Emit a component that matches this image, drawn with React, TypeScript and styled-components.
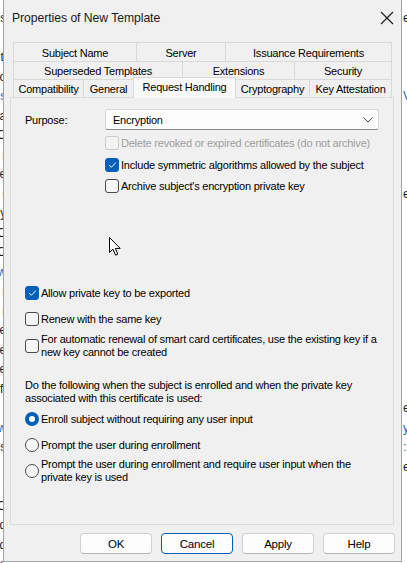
import React from "react";
import styled, { createGlobalStyle } from "styled-components";

const Global = createGlobalStyle`
  html, body { margin: 0; padding: 0; background: #ffffff; }
  body { font-family: "Liberation Sans", Arial, sans-serif; font-size: 11px; letter-spacing: -0.22px; color: #000; }
  * { box-sizing: border-box; }
`;

const Page = styled.div`
  display: flex;
  width: 407px;
  height: 563px;
  overflow: hidden;
  background: #fff;
`;

const Strip = styled.div<{ $w: number; $side: "left" | "right" }>`
  width: ${(p) => p.$w}px;
  flex: none;
  overflow: hidden;
  display: flex;
  flex-direction: column;
  padding-top: 9px;
  align-items: ${(p) => (p.$side === "left" ? "flex-end" : "flex-start")};
`;

const StripChar = styled.div<{ $c: string; $side: "left" | "right" }>`
  height: 19.5px;
  line-height: 19.5px;
  font-size: 12px;
  color: ${(p) => p.$c};
  margin-right: ${(p) => (p.$side === "left" ? "-3px" : "0")};
  margin-left: ${(p) => (p.$side === "right" ? "1px" : "0")};
  white-space: nowrap;
`;

const Dialog = styled.div`
  width: 399px;
  height: 562px;
  flex: none;
  background: #f0f0f0;
  border: 1px solid #a3a3a3;
  border-top: none;
  display: flex;
  flex-direction: column;
  position: relative;
`;

const TitleBar = styled.div`
  height: 42px;
  display: flex;
  align-items: flex-start;
  justify-content: space-between;
  padding: 10px 7px 0 8px;
`;

const Title = styled.div`
  font-size: 12.2px;
  letter-spacing: -0.05px;
  line-height: 16px;
  color: #1a1a1a;
`;

const CloseBtn = styled.div`
  width: 14px;
  height: 14px;
  margin-top: 1px;
  display: flex;
`;

const TabArea = styled.div`
  padding: 0 8px 0 9px;
  display: flex;
  flex-direction: column;
`;

const TabRow = styled.div<{ $h: number }>`
  display: flex;
  height: ${(p) => p.$h}px;
  align-items: flex-end;
`;

const Tab = styled.div<{ $w: number; $active?: boolean }>`
  width: ${(p) => p.$w}px;
  height: ${(p) => (p.$active ? "calc(100% + 3px)" : "100%")};
  margin-bottom: ${(p) => (p.$active ? "-1px" : "0")};
  flex: none;
  border: 1px solid #d9d9d9;
  border-bottom: none;
  margin-right: -1px;
  background: ${(p) => (p.$active ? "#f9f9f9" : "#f0f0f0")};
  display: flex;
  align-items: ${(p) => (p.$active ? "flex-start" : "center")};
  justify-content: center;
  padding-top: ${(p) => (p.$active ? "2px" : "1px")};
  line-height: 14px;
  color: #000;
  white-space: nowrap;
  position: relative;
  z-index: ${(p) => (p.$active ? 2 : 1)};
`;

const Panel = styled.div`
  margin: 0 7px 0 6px;
  height: 428px;
  border: 1px solid #dcdcdc;
  background: #f0f0f0;
  display: flex;
  flex-direction: column;
  padding-left: 14px;
  position: relative;
`;

const PurposeRow = styled.div`
  display: flex;
  align-items: center;
  margin-top: 11px;
  height: 21px;
`;

const Label = styled.div`
  width: 80px;
  line-height: 14px;
`;

const Combo = styled.div`
  width: 274px;
  height: 21px;
  background: #fdfdfd;
  border: 1px solid #d6d6d6;
  border-bottom-color: #8a8a8a;
  border-radius: 3px;
  display: flex;
  align-items: center;
  justify-content: space-between;
  padding: 0 5px 0 7px;
  line-height: 14px;
`;

const Option = styled.div<{ $mt: number; $indent?: number; $disabled?: boolean }>`
  display: flex;
  align-items: center;
  margin-top: ${(p) => p.$mt}px;
  margin-left: ${(p) => p.$indent || 0}px;
  color: ${(p) => (p.$disabled ? "#9d9d9d" : "#000")};
  line-height: 13px;
  min-height: 14px;
  white-space: nowrap;
`;

const Box = styled.span<{ $checked?: boolean; $disabled?: boolean }>`
  width: 14px;
  height: 14px;
  flex: none;
  border-radius: 3px;
  border: 1px solid
    ${(p) => (p.$checked ? "#005fb8" : p.$disabled ? "#c9c9c9" : "#4a4a4a")};
  background: ${(p) => (p.$checked ? "#005fb8" : p.$disabled ? "#f3f3f3" : "#f6f6f6")};
  display: flex;
  align-items: center;
  justify-content: center;
  margin-right: 2px;
`;

const Radio = styled.span<{ $checked?: boolean }>`
  width: 14px;
  height: 14px;
  flex: none;
  border-radius: 50%;
  border: ${(p) => (p.$checked ? "4px solid #005fb8" : "1px solid #4a4a4a")};
  background: ${(p) => (p.$checked ? "#ffffff" : "#f6f6f6")};
  margin-right: 2px;
`;

const Text = styled.div`
  line-height: 13px;
`;

const Paragraph = styled.div<{ $mt: number }>`
  margin-top: ${(p) => p.$mt}px;
  line-height: 13px;
  white-space: nowrap;
`;

const Cursor = styled.div`
  position: absolute;
  left: 98px;
  top: 139px;
  width: 13px;
  height: 19px;
`;

const ButtonRow = styled.div`
  display: flex;
  justify-content: flex-end;
  gap: 9px;
  padding: 8px 6px 0 0;
`;

const Button = styled.div<{ $focus?: boolean }>`
  width: 72px;
  height: 21px;
  border-radius: 4px;
  background: #fdfdfd;
  border: 1px solid ${(p) => (p.$focus ? "#005fb8" : "#d0d0d0")};
  border-bottom-color: ${(p) => (p.$focus ? "#005fb8" : "#b5b5b5")};
  display: flex;
  align-items: center;
  justify-content: center;
  line-height: 14px;
  font-size: 11.5px;
`;

const Check = () => (
  <svg width="9" height="8" viewBox="0 0 9 8">
    <path d="M1.2 4.2 L3.4 6.3 L7.8 1.5" fill="none" stroke="#ffffff" strokeWidth="1" />
  </svg>
);

const leftChars: [string, string][] = [
  ["is", "#1a1a1a"], ["", ""], ["ti", "#1a1a1a"], ["o", "#1a1a1a"], ["s", "#1c63b7"],
  ["a", "#1a1a1a"], ["O", "#1a1a1a"], ["r", "#1a1a1a"], ["e", "#1a1a1a"], ["r", "#1a1a1a"],
  ["y", "#1a1a1a"], ["O", "#1a1a1a"], ["O", "#1a1a1a"], ["w", "#1c63b7"], ["r", "#1a1a1a"],
  ["r", "#1a1a1a"], ["e", "#1a1a1a"], ["e", "#1a1a1a"], ["e", "#1a1a1a"], ["ff", "#1a1a1a"],
  [",", "#1a1a1a"], ["w", "#1c63b7"], ["s", "#1a1a1a"], ["l", "#7a1a60"], ["t", "#1a1a1a"],
  ["O", "#1a1a1a"], ["d", "#1a1a1a"], ["d", "#1a1a1a"], ["a", "#1c63b7"],
];

const rightChars: [string, string][] = [
  ["e", "#1a1a1a"], ["", ""], ["", ""], ["", ""], ["V", "#1c63b7"], ["", ""], ["", ""],
  ["", ""], ["", ""], ["e", "#1a1a1a"], ["", ""], ["", ""], ["", ""], ["", ""], ["", ""],
  ["", ""], ["", ""], ["", ""], ["", ""], ["", ""], ["e", "#1a1a1a"], ["y", "#1c63b7"],
  [":", "#1c63b7"], ["e", "#1a1a1a"],
];

const topTabs: { label: string; w: number }[] = [
  { label: "Subject Name", w: 124 },
  { label: "Server", w: 90 },
  { label: "Issuance Requirements", w: 167 },
];
const midTabs = [
  { label: "Superseded Templates", w: 170 },
  { label: "Extensions", w: 113 },
  { label: "Security", w: 98 },
];
const lowTabs = [
  { label: "Compatibility", w: 71, active: false },
  { label: "General", w: 51, active: false },
  { label: "Request Handling", w: 103, active: true },
  { label: "Cryptography", w: 75, active: false },
  { label: "Key Attestation", w: 83, active: false },
];

export default function App() {
  return (
    <>
      <Global />
      <Page>
        <Strip $w={3} $side="left">
          {leftChars.map(([c, col], i) => (
            <StripChar key={i} $c={col} $side="left">{c || "\u00a0"}</StripChar>
          ))}
        </Strip>
        <Dialog>
          <TitleBar>
            <Title>Properties of New Template</Title>
            <CloseBtn>
              <svg width="14" height="14" viewBox="0 0 14 14">
                <path d="M1 1 L13 13 M13 1 L1 13" stroke="#1a1a1a" strokeWidth="1.1" fill="none" />
              </svg>
            </CloseBtn>
          </TitleBar>
          <TabArea>
            <TabRow $h={19}>
              {topTabs.map((t) => (
                <Tab key={t.label} $w={t.w}>{t.label}</Tab>
              ))}
            </TabRow>
            <TabRow $h={18}>
              {midTabs.map((t) => (
                <Tab key={t.label} $w={t.w}>{t.label}</Tab>
              ))}
            </TabRow>
            <TabRow $h={18}>
              {lowTabs.map((t) => (
                <Tab key={t.label} $w={t.w} $active={t.active}>{t.label}</Tab>
              ))}
            </TabRow>
          </TabArea>
          <Panel>
            <PurposeRow>
              <Label>Purpose:</Label>
              <Combo>
                <span>Encryption</span>
                <svg width="10" height="6" viewBox="0 0 10 6">
                  <path d="M0.5 0.5 L5 5 L9.5 0.5" fill="none" stroke="#4a4a4a" strokeWidth="1" />
                </svg>
              </Combo>
            </PurposeRow>
            <Option $mt={6} $indent={80} $disabled>
              <Box $disabled />
              <Text>Delete revoked or expired certificates (do not archive)</Text>
            </Option>
            <Option $mt={8} $indent={80}>
              <Box $checked><Check /></Box>
              <Text>Include symmetric algorithms allowed by the subject</Text>
            </Option>
            <Option $mt={7} $indent={80}>
              <Box />
              <Text>Archive subject's encryption private key</Text>
            </Option>
            <Option $mt={93}>
              <Box $checked><Check /></Box>
              <Text>Allow private key to be exported</Text>
            </Option>
            <Option $mt={12}>
              <Box />
              <Text>Renew with the same key</Text>
            </Option>
            <Option $mt={7}>
              <Box />
              <Text>
                For automatic renewal of smart card certificates, use the existing key if a
                <br />
                new key cannot be created
              </Text>
            </Option>
            <Paragraph $mt={20}>
              Do the following when the subject is enrolled and when the private key
              <br />
              associated with this certificate is used:
            </Paragraph>
            <Option $mt={7}>
              <Radio $checked />
              <Text>Enroll subject without requiring any user input</Text>
            </Option>
            <Option $mt={12}>
              <Radio />
              <Text>Prompt the user during enrollment</Text>
            </Option>
            <Option $mt={6}>
              <Radio />
              <Text>
                Prompt the user during enrollment and require user input when the
                <br />
                private key is used
              </Text>
            </Option>
            <Cursor>
              <svg width="13" height="19" viewBox="0 0 13 19">
                <path
                  d="M0.5 0.5 L0.5 15.5 L4 12.2 L6.6 18.2 L8.8 17.2 L6.3 11.4 L11.2 11.4 Z"
                  fill="#ffffff"
                  stroke="#000000"
                  strokeWidth="1"
                  strokeLinejoin="round"
                />
              </svg>
            </Cursor>
          </Panel>
          <ButtonRow>
            <Button>OK</Button>
            <Button $focus>Cancel</Button>
            <Button>Apply</Button>
            <Button>Help</Button>
          </ButtonRow>
        </Dialog>
        <Strip $w={5} $side="right">
          {rightChars.map(([c, col], i) => (
            <StripChar key={i} $c={col} $side="right">{c || "\u00a0"}</StripChar>
          ))}
        </Strip>
      </Page>
    </>
  );
}
